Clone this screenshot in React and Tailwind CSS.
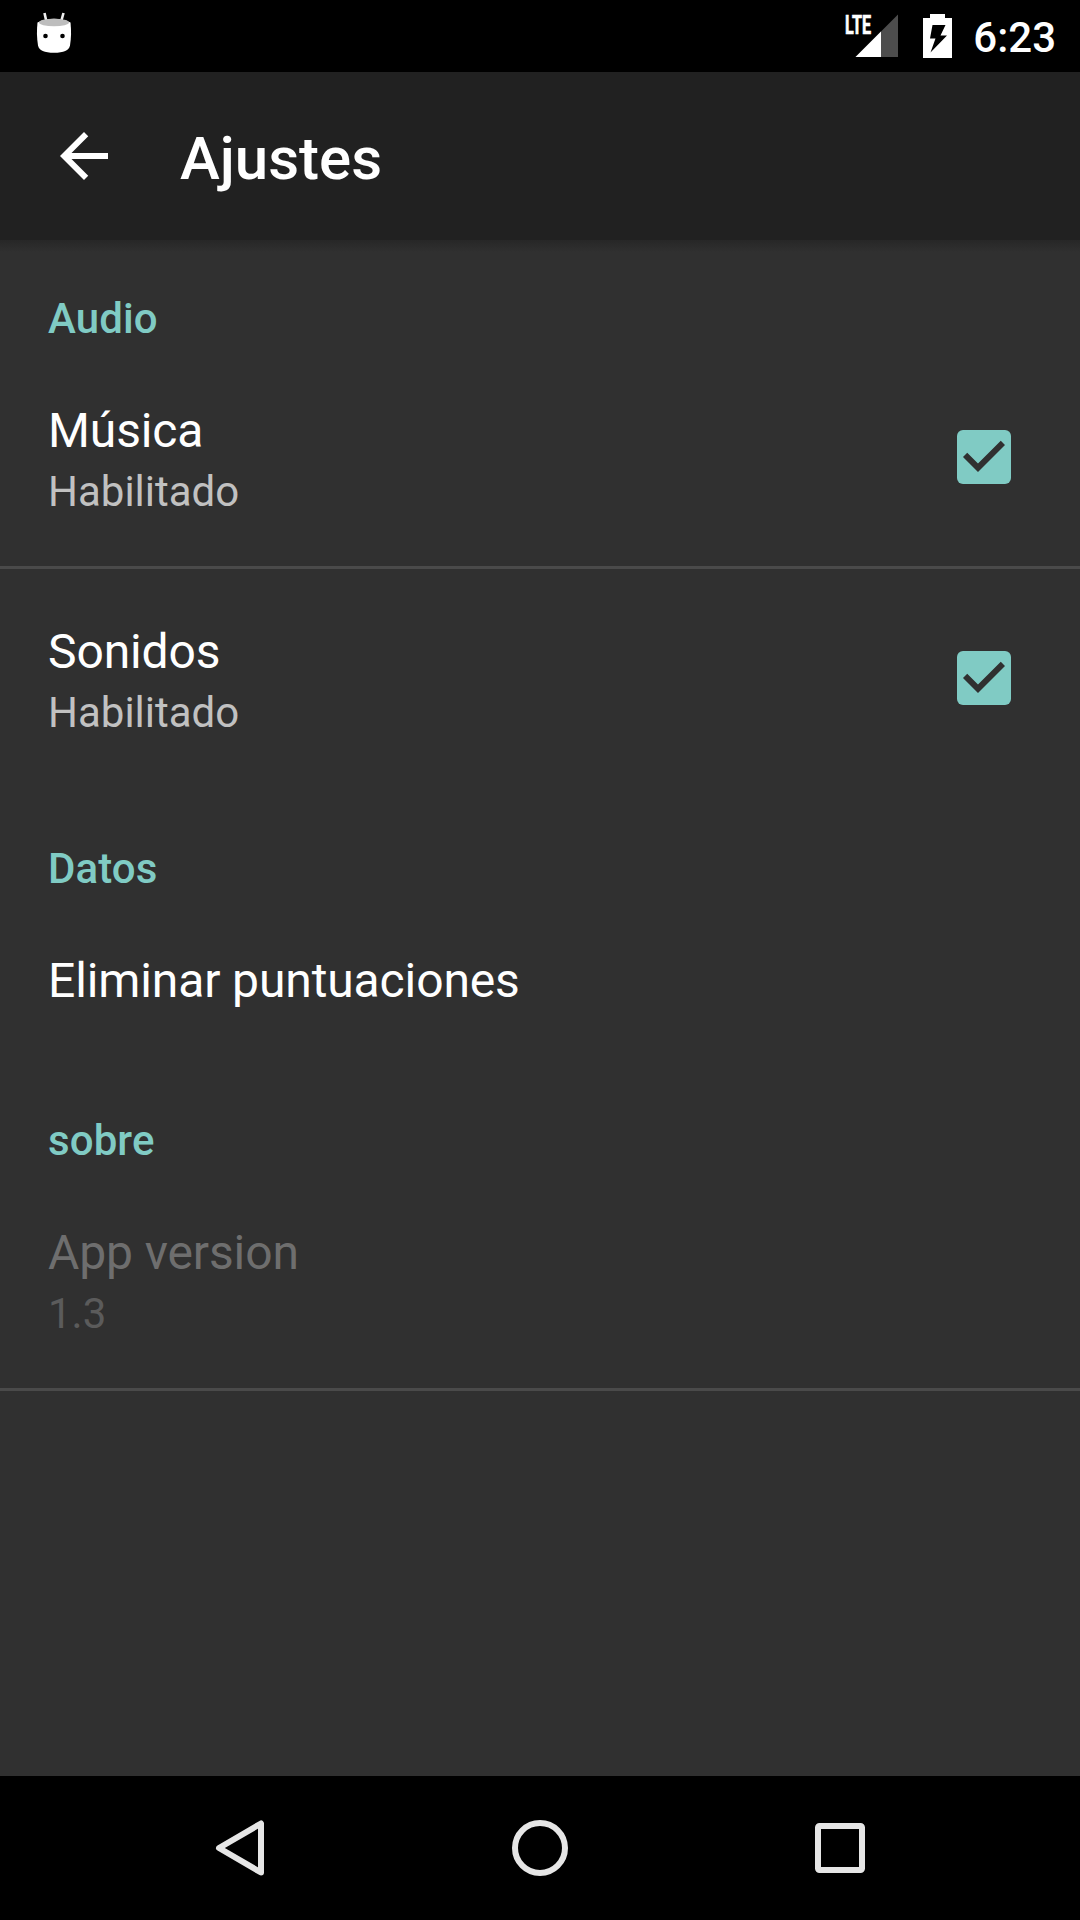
import { useState } from "react";

const StatusBar = () => (
  <header className="flex h-[72px] items-center justify-between bg-black pl-9 pr-[24px]">
    <svg width="36" height="44" viewBox="0 0 36 44" className="mb-2">
      <path d="M8.5 3l2 9M27.5 3l-2.5 9" stroke="#eeeeee" strokeWidth="2.6" />
      <path
        d="M1.5 12.5Q18 5 34.5 12.5C35.3 20 35.3 28 34 35.5Q32.5 42.8 18 42.8Q3.5 42.8 2 35.5C.7 28 .7 20 1.5 12.5z"
        fill="#ffffff"
      />
      <ellipse cx="18" cy="12.5" rx="15" ry="3.8" fill="#bdbdbd" />
      <circle cx="9.5" cy="26" r="2.3" fill="#000000" />
      <circle cx="26.5" cy="26" r="2.3" fill="#000000" />
    </svg>

    <div className="flex items-center">
      <svg width="56" height="44" viewBox="0 0 56 44" className="overflow-visible">
        <text
          x="2"
          y="19.5"
          fontSize="25"
          fontWeight="700"
          textLength="26"
          lengthAdjust="spacingAndGlyphs"
          fill="#ffffff"
          stroke="#ffffff"
          strokeWidth="0.7"
        >
          LTE
        </text>
        <path d="M55 .5v42.5H12.5z" fill="#4d4d4d" />
        <path d="M38 17.5v25.5H12.5z" fill="#ffffff" />
      </svg>
      <svg width="29" height="44" viewBox="0 0 29 44" className="ml-6">
        <path
          fillRule="evenodd"
          d="M7 0h15v4h7v40H0V4h7zM9.5 11L7 24.5h5.5L7.5 38.5L24 21.5h-6.5L22.5 11z"
          fill="#ffffff"
        />
      </svg>
      <span className="ml-[21px] pt-1 text-[42px] font-medium leading-[68px] text-white">
        6:23
      </span>
    </div>
  </header>
);

const CheckBox = ({ checked }) => (
  <svg width="72" height="72" viewBox="0 0 24 24">
    {checked ? (
      <>
        <rect x="3" y="3" width="18" height="18" rx="2" fill="#80cbc4" />
        <path
          d="M10 17l-5-5 1.41-1.41L10 14.17l7.59-7.59L19 8z"
          fill="#303030"
        />
      </>
    ) : (
      <rect
        x="4"
        y="4"
        width="16"
        height="16"
        rx="1"
        fill="none"
        stroke="#c1c1c1"
        strokeWidth="2"
      />
    )}
  </svg>
);

const Category = ({ title }) => (
  <h2 className="h-[111px] pl-12 pt-[54px] text-[42px] font-medium leading-[56px] tracking-[0.1px] text-[#80cbc4]">
    {title}
  </h2>
);

const Preference = ({ title, summary, checked, disabled, onClick }) => (
  <div
    onClick={onClick}
    className={`flex items-center justify-between pl-12 pr-[60px] ${
      summary ? "h-[218px]" : "h-[161px]"
    }`}
  >
    <div className="pt-1">
      <p
        className={`text-[48px] leading-[64px] tracking-[-0.12px] ${
          disabled ? "text-[#6e6e6e]" : "text-white"
        }`}
      >
        {title}
      </p>
      {summary && (
        <p
          className={`text-[42px] leading-[57px] ${
            disabled ? "text-[#5b5b5b]" : "text-[#c1c1c1]"
          }`}
        >
          {summary}
        </p>
      )}
    </div>
    {checked !== undefined && <CheckBox checked={checked} />}
  </div>
);

const Divider = () => <div className="h-[3px] bg-[#4a4a4a]" />;

const NavBar = () => (
  <nav className="flex h-36 items-center justify-center gap-[228px] bg-black">
    <svg width="72" height="72" viewBox="0 0 72 72">
      <path
        d="M57 11.5v49L15 36z"
        fill="none"
        stroke="#e6e6e6"
        strokeWidth="6"
        strokeLinejoin="round"
      />
    </svg>
    <svg width="72" height="72" viewBox="0 0 72 72">
      <circle cx="36" cy="36" r="25" fill="none" stroke="#e6e6e6" strokeWidth="6" />
    </svg>
    <svg width="72" height="72" viewBox="0 0 72 72">
      <rect
        x="14"
        y="14"
        width="44"
        height="44"
        rx="1.5"
        fill="none"
        stroke="#e6e6e6"
        strokeWidth="6"
      />
    </svg>
  </nav>
);

const App = () => {
  const [music, setMusic] = useState(true);
  const [sounds, setSounds] = useState(true);

  const status = (on) => (on ? "Habilitado" : "Deshabilitado");

  return (
    <div className="flex h-[1920px] w-[1080px] flex-col overflow-hidden bg-[#303030] font-['Roboto',sans-serif]">
      <StatusBar />

      <div className="flex h-[168px] items-center bg-[#212121] pl-12">
        <svg width="72" height="72" viewBox="0 0 24 24">
          <path
            d="M20 11H7.83l5.59-5.59L12 4l-8 8 8 8 1.41-1.41L7.83 13H20z"
            fill="#ffffff"
          />
        </svg>
        <h1 className="ml-[60px] pt-1.5 text-[60px] font-medium leading-[80px] text-white">
          Ajustes
        </h1>
      </div>
      <div className="h-3 shrink-0 bg-linear-to-b from-[#272727] to-[#303030]" />

      <main className="-mt-[15px] flex-1">
        <Category title="Audio" />
        <Preference
          title="Música"
          summary={status(music)}
          checked={music}
          onClick={() => setMusic(!music)}
        />
        <Divider />
        <Preference
          title="Sonidos"
          summary={status(sounds)}
          checked={sounds}
          onClick={() => setSounds(!sounds)}
        />

        <Category title="Datos" />
        <Preference title="Eliminar puntuaciones" />

        <Category title="sobre" />
        <Preference title="App version" summary="1.3" disabled />
        <Divider />
      </main>

      <NavBar />
    </div>
  );
};

export default App;
